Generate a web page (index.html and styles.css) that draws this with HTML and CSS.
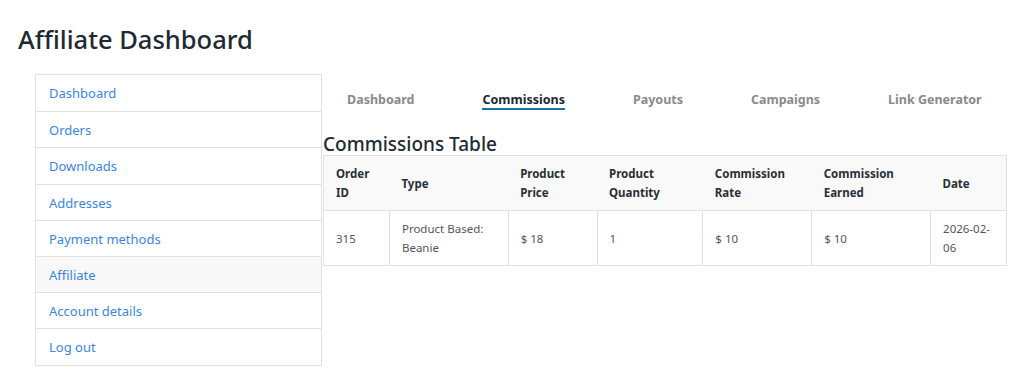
FILE: index.html
```html
<!DOCTYPE html>
<html>
<head>
<meta name="viewport" content="width=device-width, initial-scale=1">
<link rel="stylesheet" href="styles.css">
</head>
<body>

<h1 class="page-title">Affiliate Dashboard</h1>

<div class="account">
    <!-- Account navigation -->
    <nav class="account-nav">
        <a href="#">Dashboard</a>
        <a href="#">Orders</a>
        <a href="#">Downloads</a>
        <a href="#">Addresses</a>
        <a href="#">Payment methods</a>
        <a href="#" class="active">Affiliate</a>
        <a href="#">Account details</a>
        <a href="#">Log out</a>
    </nav>

    <!-- Affiliate content -->
    <div class="account-content">
        <div class="tabs">
            <a href="#" class="tab">Dashboard</a>
            <a href="#" class="tab active">Commissions</a>
            <a href="#" class="tab">Payouts</a>
            <a href="#" class="tab">Campaigns</a>
            <a href="#" class="tab">Link Generator</a>
        </div>

        <h2 class="section-title">Commissions Table</h2>
        <table class="commissions">
            <thead>
                <tr>
                    <th class="col-id">Order ID</th>
                    <th class="col-type">Type</th>
                    <th class="col-price">Product Price</th>
                    <th class="col-qty">Product Quantity</th>
                    <th class="col-rate">Commission Rate</th>
                    <th class="col-earned">Commission Earned</th>
                    <th class="col-date">Date</th>
                </tr>
            </thead>
            <tbody>
                <tr>
                    <td>315</td>
                    <td>Product Based: Beanie</td>
                    <td>$ 18</td>
                    <td class="qty">1</td>
                    <td>$ 10</td>
                    <td>$ 10</td>
                    <td>2026-02-06</td>
                </tr>
            </tbody>
        </table>
    </div>
</div>

</body>
</html>
```

FILE: styles.css
```css
* {
    box-sizing: border-box;
    margin: 0;
    padding: 0;
}

body {
    font-family: 'Noto Sans', 'Open Sans', sans-serif;
    background: #fff;
    color: #1e2933;
    padding: 0 17px 0 18px;
}

.page-title {
    font-size: 25.5px;
    font-weight: 500;
    line-height: 36px;
    padding-top: 21px;
    color: #1e2933;
}

.account {
    display: flex;
    align-items: flex-start;
    margin-top: 17px;
}

.account-nav {
    width: 287px;
    margin-left: 17px;
    border: 1px solid #e2e2e6;
    display: flex;
    flex-direction: column;
}

.account-nav a {
    display: block;
    height: 36.2px;
    line-height: 36px;
    padding-left: 13px;
    font-size: 13px;
    color: #3c85d8;
    text-decoration: none;
    border-top: 1px solid #e2e2e6;
}

.account-nav a:first-child {
    border-top: none;
}

.account-nav a.active {
    background: #f8f8f8;
}

.account-content {
    flex: 1;
    margin-left: 1px;
}

.tabs {
    display: flex;
    gap: 68px;
    padding-left: 24px;
    height: 40px;
    align-items: flex-start;
    padding-top: 18px;
}

.tab {
    font-size: 12.5px;
    font-weight: 700;
    color: #8a8a8a;
    text-decoration: none;
    line-height: 16px;
}

.tab.active {
    color: #1e2933;
    border-bottom: 2px solid #1c71a6;
}

.section-title {
    font-size: 19px;
    font-weight: 500;
    line-height: 22px;
    margin-top: 19px;
    color: #1e2933;
}

.commissions {
    border-collapse: collapse;
    width: 684px;
    font-size: 11.5px;
    line-height: 19px;
    border: 1px solid #e2e2e6;
}

.commissions th {
    background: #f9f9f9;
    font-weight: 700;
    text-align: left;
    color: #2a2f36;
    padding: 8px 12px;
    height: 54px;
}

.commissions td {
    color: #555;
    padding: 8px 12px;
    height: 55px;
    border: 1px solid #e2e2e6;
}

.commissions td.qty {
    color: #2c5d9a;
}

.col-id { width: 66px; }
.col-type { width: 119px; }
.col-price { width: 89px; }
.col-qty { width: 106px; }
.col-rate { width: 109px; }
.col-earned { width: 119px; }
.col-date { width: 76px; }
```
